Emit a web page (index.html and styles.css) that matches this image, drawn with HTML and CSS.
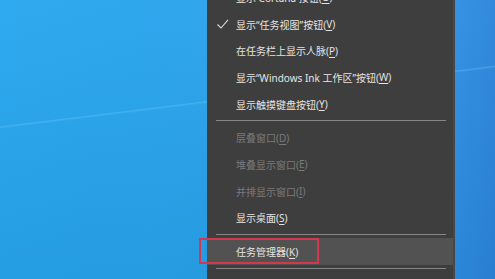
FILE: index.html
```html
<!DOCTYPE HTML>
<html>
<head>
    <title>任务栏菜单</title>
    <meta charset="utf-8">
    <link rel="stylesheet" href="styles.css">
</head>
<body>
    <div class="desk">
        <div class="menu">
            <div class="item">显示 Cortana 按钮(<u>O</u>)</div>
            <div class="item">
                <svg class="check" width="14" height="12" viewBox="0 0 14 12">
                    <polyline points="1.5,6.5 5,10 12,1.8" fill="none" stroke="#d8d8d8" stroke-width="1.1"/>
                </svg>
                显示“任务视图”按钮(<u>V</u>)
            </div>
            <div class="item">在任务栏上显示人脉(<u>P</u>)</div>
            <div class="item">显示“Windows Ink 工作区”按钮(<u>W</u>)</div>
            <div class="item">显示触摸键盘按钮(<u>Y</u>)</div>
            <div class="sep"></div>
            <div class="item disabled">层叠窗口(<u>D</u>)</div>
            <div class="item disabled">堆叠显示窗口(<u>E</u>)</div>
            <div class="item disabled">并排显示窗口(<u>I</u>)</div>
            <div class="item">显示桌面(<u>S</u>)</div>
            <div class="sep"></div>
            <div class="item hover">
                任务管理器(<u>K</u>)
                <div class="mark"></div>
            </div>
            <div class="sep"></div>
            <div class="item"></div>
        </div>
    </div>
</body>
</html>
```

FILE: styles.css
```css
* {
    box-sizing: border-box;
}

body {
    margin: 0;
    padding: 0;
    width: 495px;
    height: 279px;
    overflow: hidden;
    font-family: "Noto Sans", "Noto Sans CJK SC", sans-serif;
}

.desk {
    height: 279px;
    overflow: hidden;
    background:
        linear-gradient(173deg, transparent 0, transparent 125px, rgba(120, 210, 255, 0.3) 126px, transparent 128px),
        linear-gradient(180deg, rgba(255, 255, 255, 0.04) 0, rgba(0, 0, 0, 0.05) 279px),
        linear-gradient(90deg, #27a6ef 0, #28a3ec 200px, #2f94e6 430px, #2b85dc 495px);
}

.menu {
    width: 248px;
    margin-left: 207px;
    margin-top: -16px;
    background: #3e3e3e;
    border-right: 2px solid #474747;
}

.item {
    position: relative;
    height: 26.7px;
    display: flex;
    align-items: center;
    padding-left: 29px;
    font-size: 10px;
    color: #e4e4e4;
    white-space: nowrap;
}

.item u {
    text-decoration-thickness: 1px;
    text-underline-offset: 2px;
}

.disabled {
    color: #7a7a7a;
}

.hover {
    background: #525252;
}

.check {
    position: absolute;
    left: 9px;
    top: 7px;
}

.sep {
    height: 7px;
    display: flex;
    align-items: center;
    padding: 0 7px 0 9px;
}

.sep::before {
    content: "";
    flex: 1;
    height: 1px;
    background: #878787;
}

.mark {
    position: absolute;
    left: -8px;
    top: 0;
    width: 120px;
    height: 26px;
    border: 2px solid #d4384c;
}
```
